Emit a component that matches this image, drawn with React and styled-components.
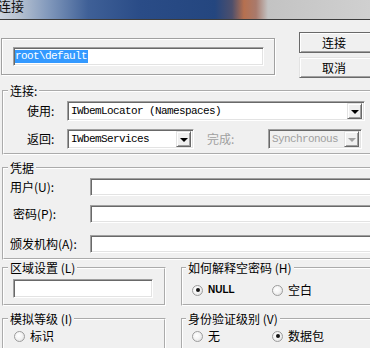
import React from 'react';
import styled, { createGlobalStyle } from 'styled-components';

const Global = createGlobalStyle`
  html, body {
    margin: 0;
    padding: 0;
    background: #ffffff;
  }
  body {
    font-family: "Noto Sans CJK SC", "Liberation Sans", sans-serif;
    font-size: 12px;
    color: #000000;
  }
  * {
    box-sizing: border-box;
  }
`

const Window = styled.div`
  width: 370px;
  height: 348px;
  overflow: hidden;
  background: #f0f0f0;
`

const TitleBar = styled.div`
  height: 20px;
  border-bottom: 1px solid #3c3c3c;
  display: flex;
  align-items: flex-start;
  overflow: hidden;
  background: linear-gradient(90deg, #cdd4de 0px, #b8c3d2 18px, #8299bc 48px, #3f6097 88px, #2a4c87 140px, #24467f 215px, #4d4f6c 232px, #b6704f 244px, #a97a6c 256px, #c3c3c3 268px, #d0d0d0 370px);
`

const TitleText = styled.span`
  margin: -2px 0 0 -2px;
  font-size: 13px;
  line-height: 15px;
  color: #101010;
`

const Body = styled.div`
  width: 430px;
  display: flex;
  flex-direction: column;
`

const TopRow = styled.div`
  display: flex;
  align-items: flex-start;
  margin-top: 12px;
`

const PathBox = styled.div`
  margin: 6px 0 0 1px;
  width: 274px;
  height: 37px;
  border: 1px solid #a0a0a0;
  box-shadow: inset 1px 1px #ffffff, 1px 1px #ffffff;
  padding: 8px 0 0 11px;
`

const Edit = styled.div`
  width: ${p => p.$w}px;
  height: ${p => p.$h || 19}px;
  background: #ffffff;
  border: 1px solid;
  border-color: #a0a0a0 #ffffff #ffffff #a0a0a0;
  box-shadow: inset 1px 1px #696969, inset -1px -1px #e3e3e3;
  display: flex;
  align-items: center;
  padding-left: 1px;
  flex-shrink: 0;
`

const Mono = styled.span`
  font-family: "Liberation Mono", "DejaVu Sans Mono", monospace;
  font-size: 11px;
  letter-spacing: -0.6px;
  line-height: 13px;
  white-space: pre;
  color: ${p => (p.$disabled ? '#a0a0a0' : '#000000')};
`

const Selected = styled(Mono)`
  background: #3399ff;
  color: #ffffff;
  padding-right: 1px;
`

const ButtonCol = styled.div`
  display: flex;
  flex-direction: column;
  gap: 4px;
  margin-left: 24px;
`

const Button = styled.div`
  width: 74px;
  height: 21px;
  display: flex;
  align-items: center;
  justify-content: center;
  background: #f0f0f0;
  border: 1px solid;
  border-color: ${p => (p.$default ? '#696969' : '#e3e3e3 #696969 #696969 #e3e3e3')};
  box-shadow: inset 1px 1px #ffffff, inset -1px -1px #a0a0a0;
  font-size: 12px;
  line-height: 14px;
  padding-right: 4px;
`

const Group = styled.fieldset`
  margin: ${p => p.$mt || 0}px 0 0 ${p => p.$ml ?? 2}px;
  padding: 0;
  width: ${p => (p.$w ? `${p.$w}px` : 'auto')};
  border: 2px groove #ffffff;
  min-width: 0;
  flex-shrink: 0;
`

const Legend = styled.legend`
  margin-left: ${p => p.$offset ?? 4}px;
  padding: 0 2px;
  font-size: 12px;
  line-height: 14px;
  white-space: nowrap;
`

const Content = styled.div`
  display: flex;
  flex-direction: column;
  padding: ${p => p.$pad};
  gap: ${p => p.$gap || 0}px;
`

const FieldRow = styled.div`
  display: flex;
  align-items: center;
  margin-top: ${p => p.$mt || 0}px;
`

const Label = styled.span`
  width: ${p => p.$w}px;
  padding-left: ${p => p.$indent || 0}px;
  flex-shrink: 0;
  font-size: 12px;
  line-height: 14px;
  white-space: nowrap;
  color: ${p => (p.$disabled ? '#a0a0a0' : '#000000')};
  margin-left: ${p => p.$ml || 0}px;
`

const Combo = styled.div`
  width: ${p => p.$w}px;
  height: 20px;
  flex-shrink: 0;
  display: flex;
  align-items: center;
  justify-content: space-between;
  background: ${p => (p.$disabled ? '#f0f0f0' : '#ffffff')};
  border: 1px solid;
  border-color: #a0a0a0 #ffffff #ffffff #a0a0a0;
  box-shadow: inset 1px 1px #696969, inset -1px -1px #e3e3e3;
  padding: 2px 2px 2px 3px;
`

const DropButton = styled.div`
  width: 15px;
  height: 16px;
  display: flex;
  align-items: center;
  justify-content: center;
  background: #f0f0f0;
  border: 1px solid;
  border-color: #e3e3e3 #696969 #696969 #e3e3e3;
  box-shadow: inset 1px 1px #ffffff, inset -1px -1px #a0a0a0;
`

const Arrow = styled.span`
  width: 0;
  height: 0;
  border-left: 4px solid transparent;
  border-right: 4px solid transparent;
  border-top: 4px solid ${p => (p.$disabled ? '#a0a0a0' : '#000000')};
  margin-top: 1px;
`

const SideBySide = styled.div`
  display: flex;
  align-items: stretch;
  margin-top: ${p => p.$mt || 0}px;
  gap: 15px;
`

const RadioRow = styled.div`
  display: flex;
  align-items: center;
  padding: ${p => p.$pad};
`

const RadioItem = styled.label`
  display: flex;
  align-items: center;
  gap: ${p => p.$gap || 5}px;
  width: ${p => (p.$w ? `${p.$w}px` : 'auto')};
  font-size: 12px;
  line-height: 14px;
`

const RadioCircle = styled.span`
  width: 11px;
  height: 11px;
  border-radius: 50%;
  border: 1px solid #9c9c9c;
  background: radial-gradient(circle at 40% 40%, #ffffff 0%, #f4f4f4 45%, #d8d8d8 100%);
  display: inline-flex;
  align-items: center;
  justify-content: center;
  flex-shrink: 0;
  &::after {
    content: '';
    display: ${p => (p.$checked ? 'block' : 'none')};
    width: 4px;
    height: 4px;
    border-radius: 50%;
    background: #151515;
  }
`

const NullText = styled.span`
  font-family: "Liberation Sans", sans-serif;
  font-size: 10px;
  font-weight: bold;
`

function ComboBox({ w, text, disabled }) {
  return (
    <Combo $w={w} $disabled={disabled}>
      <Mono $disabled={disabled}>{text}</Mono>
      <DropButton>
        <Arrow $disabled={disabled} />
      </DropButton>
    </Combo>
  )
}

function Radio({ checked, children, w, gap }) {
  return (
    <RadioItem $w={w} $gap={gap}>
      <RadioCircle $checked={checked} />
      {children}
    </RadioItem>
  )
}

const App = () => {
  return (
    <>
      <Global />
      <Window>
        <TitleBar>
          <TitleText>连接</TitleText>
        </TitleBar>

        <Body>
          <TopRow>
            <PathBox>
              <Edit $w={251}>
                <Selected>root\default</Selected>
              </Edit>
            </PathBox>
            <ButtonCol>
              <Button $default>连接</Button>
              <Button>取消</Button>
            </ButtonCol>
          </TopRow>

          <Group $mt={6}>
            <Legend>连接:</Legend>
            <Content $pad="3px 0 4px 23px" $gap={8}>
              <FieldRow>
                <Label $w={40}>使用:</Label>
                <ComboBox w={298} text="IWbemLocator (Namespaces)" />
              </FieldRow>
              <FieldRow>
                <Label $w={40}>返回:</Label>
                <ComboBox w={127} text="IWbemServices" />
                <Label $w={61} $ml={13} $disabled>完成:</Label>
                <ComboBox w={94} text="Synchronous" disabled />
              </FieldRow>
            </Content>
          </Group>

          <Group $mt={6}>
            <Legend>凭据</Legend>
            <Content $pad="3px 0 5px 6px">
              <FieldRow>
                <Label $w={80}>用户(U):</Label>
                <Edit $w={320} $h={18} />
              </FieldRow>
              <FieldRow $mt={9}>
                <Label $w={80} $indent={3}>密码(P):</Label>
                <Edit $w={320} $h={18} />
              </FieldRow>
              <FieldRow $mt={12}>
                <Label $w={80}>颁发机构(A):</Label>
                <Edit $w={320} $h={18} />
              </FieldRow>
            </Content>
          </Group>

          <SideBySide $mt={1}>
            <Group $w={164}>
              <Legend>区域设置 (L)</Legend>
              <Content $pad="4px 0 6px 9px">
                <Edit $w={140} />
              </Content>
            </Group>
            <Group $w={240} $ml={0}>
              <Legend $offset={3}>如何解释空密码 (H)</Legend>
              <RadioRow $pad="8px 0 0 9px">
                <Radio checked w={80} gap={5}><NullText>NULL</NullText></Radio>
                <Radio>空白</Radio>
              </RadioRow>
            </Group>
          </SideBySide>

          <SideBySide $mt={6}>
            <Group $w={164}>
              <Legend>模拟等级 (I)</Legend>
              <RadioRow $pad="3px 0 10px 10px">
                <Radio>标识</Radio>
              </RadioRow>
            </Group>
            <Group $w={240} $ml={0}>
              <Legend $offset={3}>身份验证级别 (V)</Legend>
              <RadioRow $pad="3px 0 10px 9px">
                <Radio w={80}>无</Radio>
                <Radio checked>数据包</Radio>
              </RadioRow>
            </Group>
          </SideBySide>
        </Body>
      </Window>
    </>
  );
}

export default App;
